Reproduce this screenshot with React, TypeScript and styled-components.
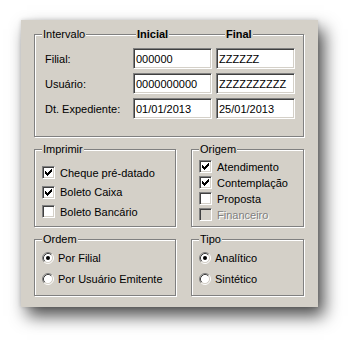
import React from 'react'
import styled, { createGlobalStyle } from 'styled-components'

const GlobalStyle = createGlobalStyle`
  body {
    margin: 0;
    background: #fff;
    font-family: "Liberation Sans", Arial, sans-serif;
    font-size: 11px;
    color: #000;
  }
`;

const Page = styled.div`
  width: 360px;
  height: 349px;
  box-sizing: border-box;
  padding: 20px 0 0 21px;
`;

const Panel = styled.div`
  width: 297px;
  height: 287px;
  box-sizing: border-box;
  padding: 14px 14px 11px 13px;
  background: #d4d0c8;
  box-shadow: 6px 9px 16px rgba(0, 0, 0, 0.7), 0 0 4px rgba(0, 0, 0, 0.15);
  display: grid;
  grid-template-columns: 142px 113px;
  grid-template-rows: 103px 78px 57px;
  column-gap: 15px;
  row-gap: 12px;
`;

const Group = styled.div<{ $wide?: boolean }>`
  grid-column: ${p => (p.$wide ? '1 / -1' : 'auto')};
  border: 1px solid #808080;
  box-shadow: inset 1px 1px 0 #fff, 1px 1px 0 #fff;
  display: flex;
  flex-direction: column;
  padding: 0 ${p => (p.$wide ? 10 : 7)}px;
`;

const Caption = styled.span`
  align-self: flex-start;
  margin-top: -7px;
  padding: 0 1px;
  height: 13px;
  line-height: 13px;
  background: #d4d0c8;
`;

const Columns = styled.div`
  display: grid;
  grid-template-columns: 84px 79px 79px;
  column-gap: 4px;
`;

const CaptionRow = styled(Columns)`
  margin-top: -7px;
  height: 13px;
  line-height: 13px;
`;

const HeadTitle = styled.span<{ $indent: number; $bold?: boolean }>`
  justify-self: start;
  margin-left: ${p => p.$indent}px;
  padding: 0 1px;
  background: #d4d0c8;
  font-weight: ${p => (p.$bold ? 'bold' : 'normal')};
`;

const FieldGrid = styled(Columns)`
  margin-top: 7px;
  row-gap: 4px;
  grid-auto-rows: 21px;
  align-items: center;
`;

const Field = styled.div`
  height: 21px;
  box-sizing: border-box;
  border: 1px solid;
  border-color: #808080 #fff #fff #808080;
  box-shadow: inset 1px 1px 0 #404040, inset -1px -1px 0 #d4d0c8;
  background: #fff;
  padding: 0 2px;
  display: flex;
  align-items: center;
  white-space: nowrap;
  overflow: hidden;
`;

const OptionList = styled.div<{ $top: number; $gap: number }>`
  display: flex;
  flex-direction: column;
  padding-top: ${p => p.$top}px;
  gap: ${p => p.$gap}px;
`;

const Option = styled.div<{ $disabled?: boolean; $spacing: number }>`
  display: flex;
  align-items: center;
  gap: ${p => p.$spacing}px;
  height: 13px;
  color: ${p => (p.$disabled ? '#808080' : '#000')};
  text-shadow: ${p => (p.$disabled ? '1px 1px 0 #fff' : 'none')};
`;

const Box = styled.span<{ $disabled?: boolean }>`
  width: 13px;
  height: 13px;
  flex: none;
  box-sizing: border-box;
  border: 1px solid;
  border-color: #808080 #fff #fff #808080;
  box-shadow: inset 1px 1px 0 #404040, inset -1px -1px 0 #d4d0c8;
  background: ${p => (p.$disabled ? '#d4d0c8' : '#fff')};
  display: flex;
  align-items: center;
  justify-content: center;
`;

const CheckMark = () => (
  <svg width="7" height="7" viewBox="0 0 7 7" shapeRendering="crispEdges">
    <path d="M0 2h1v3h-1z M1 3h1v3h-1z M2 4h1v3h-1z M3 3h1v3h-1z M4 2h1v3h-1z M5 1h1v3h-1z M6 0h1v3h-1z" fill="#000" />
  </svg>
);

const RadioMark = ({ on }: { on: boolean }) => (
  <svg width="12" height="12" viewBox="0 0 12 12" style={{ flex: 'none' }}>
    <circle cx="6" cy="6" r="4.5" fill="#fff" />
    <path d="M2.11 9.89 A5.5 5.5 0 0 1 9.89 2.11" fill="none" stroke="#808080" />
    <path d="M2.82 9.18 A4.5 4.5 0 0 1 9.18 2.82" fill="none" stroke="#404040" />
    <path d="M9.89 2.11 A5.5 5.5 0 0 1 2.11 9.89" fill="none" stroke="#fff" />
    <path d="M9.18 2.82 A4.5 4.5 0 0 1 2.82 9.18" fill="none" stroke="#d4d0c8" />
    {on && <circle cx="6" cy="6" r="2" fill="#000" />}
  </svg>
);

const Check = ({ label, on, disabled }: { label: string; on?: boolean; disabled?: boolean }) => (
  <Option $disabled={disabled} $spacing={5}>
    <Box $disabled={disabled}>{on && <CheckMark />}</Box>
    {label}
  </Option>
);

const Radio = ({ label, on }: { label: string; on?: boolean }) => (
  <Option $spacing={4}>
    <RadioMark on={!!on} />
    {label}
  </Option>
);

const rows = [
  { label: 'Filial:', from: '000000', to: 'ZZZZZZ' },
  { label: 'Usuário:', from: '0000000000', to: 'ZZZZZZZZZZ' },
  { label: 'Dt. Expediente:', from: '01/01/2013', to: '25/01/2013' },
];

const App = () => {
  return (
    <Page>
      <GlobalStyle />
      <Panel>
        <Group $wide>
          <CaptionRow>
            <HeadTitle $indent={-3}>Intervalo</HeadTitle>
            <HeadTitle $indent={3} $bold>Inicial</HeadTitle>
            <HeadTitle $indent={9} $bold>Final</HeadTitle>
          </CaptionRow>
          <FieldGrid>
            {rows.map(r => (
              <React.Fragment key={r.label}>
                <span>{r.label}</span>
                <Field>{r.from}</Field>
                <Field>{r.to}</Field>
              </React.Fragment>
            ))}
          </FieldGrid>
        </Group>

        <Group>
          <Caption>Imprimir</Caption>
          <OptionList $top={10} $gap={6.5}>
            <Check label="Cheque pré-datado" on />
            <Check label="Boleto Caixa" on />
            <Check label="Boleto Bancário" />
          </OptionList>
        </Group>

        <Group>
          <Caption>Origem</Caption>
          <OptionList $top={4} $gap={3}>
            <Check label="Atendimento" on />
            <Check label="Contemplação" on />
            <Check label="Proposta" />
            <Check label="Financeiro" disabled />
          </OptionList>
        </Group>

        <Group>
          <Caption>Ordem</Caption>
          <OptionList $top={5} $gap={8}>
            <Radio label="Por Filial" on />
            <Radio label="Por Usuário Emitente" />
          </OptionList>
        </Group>

        <Group>
          <Caption>Tipo</Caption>
          <OptionList $top={5} $gap={8}>
            <Radio label="Analítico" on />
            <Radio label="Sintético" />
          </OptionList>
        </Group>
      </Panel>
    </Page>
  )
}

export default App
